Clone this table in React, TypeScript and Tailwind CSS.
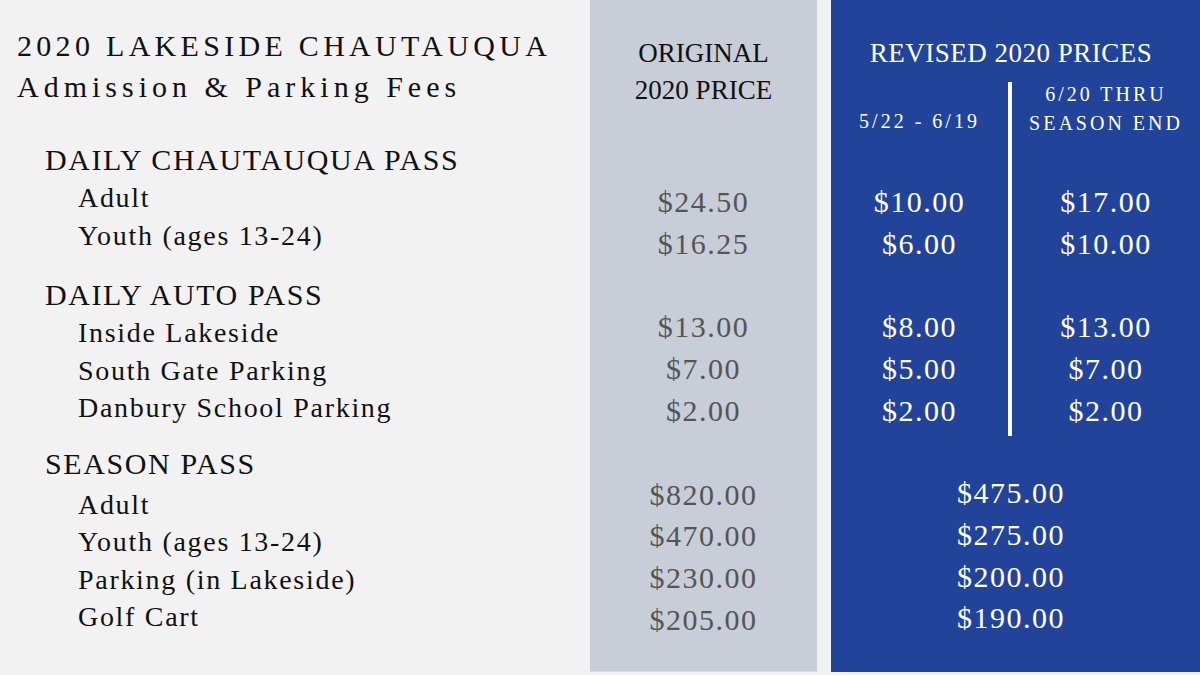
import React from 'react';

type Row = { label: string; original: string; early: string; late: string };

const dailyPass: Row[] = [
  { label: 'Adult', original: '$24.50', early: '$10.00', late: '$17.00' },
  { label: 'Youth (ages 13-24)', original: '$16.25', early: '$6.00', late: '$10.00' },
];

const autoPass: Row[] = [
  { label: 'Inside Lakeside', original: '$13.00', early: '$8.00', late: '$13.00' },
  { label: 'South Gate Parking', original: '$7.00', early: '$5.00', late: '$7.00' },
  { label: 'Danbury School Parking', original: '$2.00', early: '$2.00', late: '$2.00' },
];

const seasonPass = [
  { label: 'Adult', original: '$820.00', revised: '$475.00' },
  { label: 'Youth (ages 13-24)', original: '$470.00', revised: '$275.00' },
  { label: 'Parking (in Lakeside)', original: '$230.00', revised: '$200.00' },
  { label: 'Golf Cart', original: '$205.00', revised: '$190.00' },
];

const serif = { fontFamily: '"Liberation Serif", "Times New Roman", serif' };

const Price = ({ children }: { children?: React.ReactNode }) => (
  <div className="h-[41.8px] leading-[41.8px] text-[30px] tracking-[1.5px]">{children}</div>
);

const SectionTitle = ({ children, className = '' }: { children: React.ReactNode; className?: string }) => (
  <div className={`pl-[45px] h-[38px] leading-[38px] text-[30px] tracking-[1.6px] text-[#111] ${className}`}>{children}</div>
);

const Item = ({ children }: { children: React.ReactNode }) => (
  <div className="pl-[78px] h-[37.5px] leading-[37.5px] text-[28px] tracking-[1.7px] text-[#111]">{children}</div>
);

export default function App() {
  return (
    <div className="w-[1200px] h-[675px] bg-[#f2f2f2] flex overflow-hidden" style={serif}>
      {/* Labels */}
      <div className="w-[590px] flex flex-col pt-[25px]">
        <div className="pl-[17px] text-[30px] leading-[41px] text-[#111]">
          <div className="tracking-[4.3px]">2020 LAKESIDE CHAUTAUQUA</div>
          <div className="tracking-[5px]">Admission &amp; Parking Fees</div>
        </div>

        <SectionTitle className="mt-[34px]">DAILY CHAUTAUQUA PASS</SectionTitle>
        {dailyPass.map((r) => (
          <Item key={r.label}>{r.label}</Item>
        ))}

        <SectionTitle className="mt-[22px]">DAILY AUTO PASS</SectionTitle>
        {autoPass.map((r) => (
          <Item key={r.label}>{r.label}</Item>
        ))}

        <SectionTitle className="mt-[18px] mb-[3px]">SEASON PASS</SectionTitle>
        {seasonPass.map((r) => (
          <Item key={r.label}>{r.label}</Item>
        ))}
      </div>

      {/* Original price column */}
      <div className="w-[227px] h-[672px] bg-[#c7ced8] border-b border-[#d8dde4] flex flex-col text-center">
        <div className="h-[181px] pt-[35px] text-[27px] leading-[37px] text-[#111]">
          <div>ORIGINAL</div>
          <div>2020 PRICE</div>
        </div>
        <div className="text-[#555]">
          {dailyPass.map((r) => (
            <Price key={r.label}>{r.original}</Price>
          ))}
          <Price />
          {autoPass.map((r) => (
            <Price key={r.label}>{r.original}</Price>
          ))}
          <Price />
          {seasonPass.map((r) => (
            <Price key={r.label}>{r.original}</Price>
          ))}
        </div>
      </div>

      {/* Revised prices */}
      <div className="ml-[14px] flex-1 h-[672px] bg-[#21449a] text-white flex flex-col">
        <div className="h-[82px] pt-[39px] pr-[9px] text-center text-[27px] leading-[29px] tracking-[0.5px]">REVISED 2020 PRICES</div>

        <div className="h-[354px] grid grid-cols-[177px_1fr]">
          <div className="text-center">
            <div className="h-[99px] pt-[25px] text-[20px] leading-[29px] tracking-[3px]">5/22 - 6/19</div>
            {dailyPass.map((r) => (
              <Price key={r.label}>{r.early}</Price>
            ))}
            <Price />
            {autoPass.map((r) => (
              <Price key={r.label}>{r.early}</Price>
            ))}
          </div>
          <div className="border-l-4 border-white text-center">
            <div className="h-[99px] text-[20px] tracking-[3px]">
              <div className="leading-[24px]">6/20 THRU</div>
              <div className="leading-[35px]">SEASON END</div>
            </div>
            {dailyPass.map((r) => (
              <Price key={r.label}>{r.late}</Price>
            ))}
            <Price />
            {autoPass.map((r) => (
              <Price key={r.label}>{r.late}</Price>
            ))}
          </div>
        </div>

        <div className="pt-[36px] pr-[9px] text-center">
          {seasonPass.map((r) => (
            <Price key={r.label}>{r.revised}</Price>
          ))}
        </div>
      </div>
    </div>
  );
}
